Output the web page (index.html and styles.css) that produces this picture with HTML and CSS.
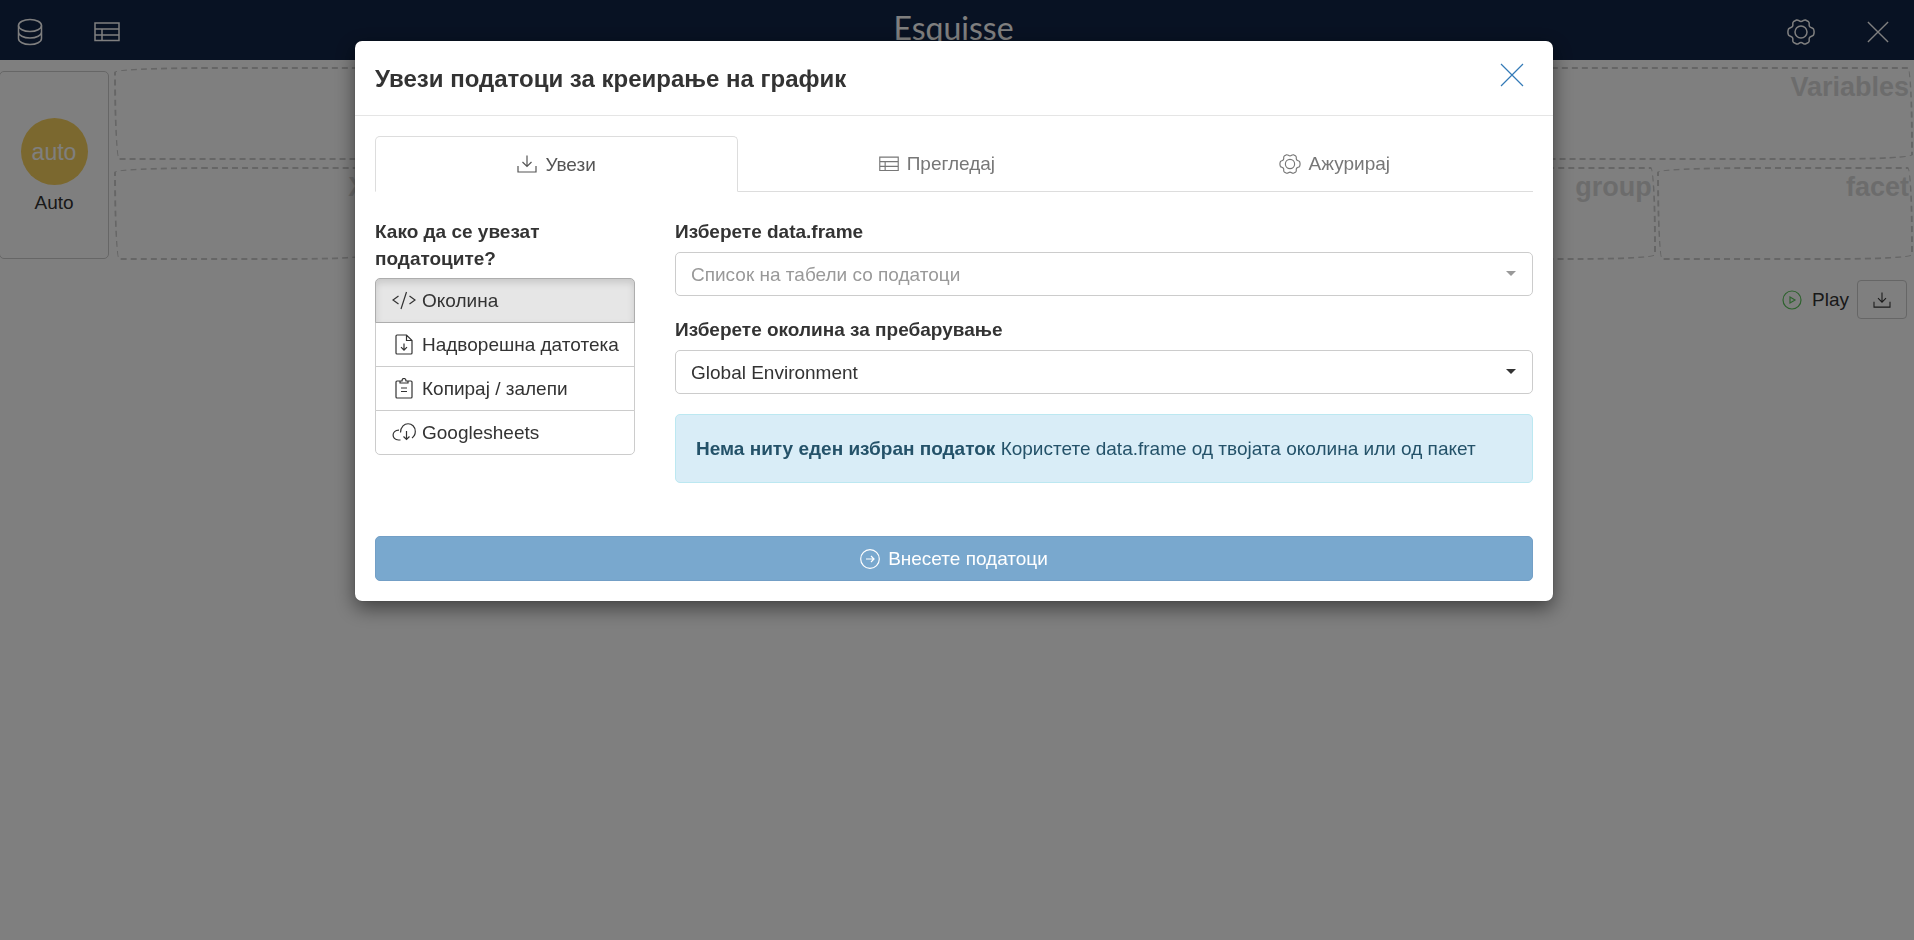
FILE: index.html
```html
<!DOCTYPE html>
<html lang="mk">
<head>
<meta charset="utf-8">
<title>Esquisse</title>
<meta name="viewport" content="width=device-width, initial-scale=1">
<link rel="stylesheet" href="styles.css">
</head>
<body>
<svg class="sprite" aria-hidden="true">
  <symbol id="i-table" viewBox="0 0 26 20"><path d="M1 1h24v17.500h-24zM1 7h24M1 13h24M8 7v11.500"/></symbol>
  <symbol id="i-gear" viewBox="0 0 28 26"><circle cx="14" cy="13" r="6"/><path d="M9.500 1C11.500 .5 12 2.500 14 2.500S16.500 .5 18.500 1L21.500 2.700C23 4 21.500 5.500 22.500 7.300S25.500 8.500 26.500 10Q27.700 13 26.500 16C25.500 17.500 23.500 17 22.500 18.700S23 22 21.500 23.300L18.500 25C16.500 25.500 16 23.500 14 23.500S11.500 25.500 9.500 25L6.500 23.300C5 22 6.500 20.500 5.500 18.700S2.500 17.500 1.500 16Q.3 13 1.500 10C2.500 8.500 4.500 9 5.500 7.300S5 4 6.500 2.700Z"/></symbol>
  <symbol id="i-import" viewBox="0 0 20 18"><path d="M1 11v6h18v-6M10 .5v10.500M5.500 7L10 11.500 14.500 7"/></symbol>
  <symbol id="i-x" viewBox="0 0 24 24"><path d="M1 1l22 22M23 1L1 23"/></symbol>
</svg>

<div class="app">
  <header class="topbar">
    <div class="topbar-side">
      <button class="icon-button" aria-label="Data"><svg class="i-db" viewBox="0 0 26 28"><ellipse cx="13" cy="7.500" rx="11.500" ry="6"/><path d="M1.500 7.500v13c0 3.300 5 6 11.500 6s11.500-2.700 11.500-6v-13M1.500 14c0 3.300 5 6 11.500 6s11.500-2.700 11.500-6"/></svg></button>
      <button class="icon-button" aria-label="Table"><svg class="i-table"><use href="#i-table"/></svg></button>
    </div>
    <h1 class="logo">Esquisse</h1>
    <div class="topbar-side">
      <button class="icon-button" aria-label="Settings"><svg class="i-gear"><use href="#i-gear"/></svg></button>
      <button class="icon-button" aria-label="Close"><svg class="i-x"><use href="#i-x"/></svg></button>
    </div>
  </header>

  <main class="workspace">
    <button class="geom"><span class="geom-icon">auto</span><span>Auto</span></button>
    <div class="zones">
      <div class="zone zone-wide">Variables</div>
      <div class="zone">X</div>
      <div class="zone"></div>
      <div class="zone"></div>
      <div class="zone"></div>
      <div class="zone"></div>
      <div class="zone">group</div>
      <div class="zone">facet</div>
    </div>
  </main>

  <div class="plot-tools">
    <button class="play"><svg class="i-play" viewBox="0 0 20 20"><circle cx="10" cy="10" r="9"/><path d="M8 7l5 3-5 3z"/></svg>Play</button>
    <button class="export" aria-label="Export"><svg class="i-export"><use href="#i-import"/></svg></button>
  </div>
</div>

<div class="backdrop">
  <section class="modal" role="dialog" aria-modal="true" aria-labelledby="modal-title">
    <header class="modal-header">
      <h2 class="modal-title" id="modal-title">Увези податоци за креирање на график</h2>
      <button class="modal-close" aria-label="Close"><svg><use href="#i-x"/></svg></button>
    </header>
    <div class="modal-body">
      <nav class="tabs">
        <a class="tab tab-active" href="#import"><svg class="tab-import"><use href="#i-import"/></svg>Увези</a>
        <a class="tab" href="#view"><svg class="tab-table"><use href="#i-table"/></svg>Прегледај</a>
        <a class="tab" href="#update"><svg class="tab-gear"><use href="#i-gear"/></svg>Ажурирај</a>
      </nav>
      <div class="panel" id="import">
        <fieldset class="sources">
          <legend class="label">Како да се увезат податоците?</legend>
          <label class="source"><input type="radio" name="source" checked><svg viewBox="0 0 24 22"><path d="M6.500 6L1 10l5.500 4M17.500 6l5.500 4-5.500 4M14.500 2L9 19"/></svg>Околина</label>
          <label class="source"><input type="radio" name="source"><svg viewBox="0 0 24 22"><path d="M14.500 1H5Q4 1 4 2v17Q4 20 5 20h14Q20 20 20 19V6.500zM14.500 1v5.500H20M12 9.500v6.500M9 13.200l3 3 3-3"/></svg>Надворешна датотека</label>
          <label class="source"><input type="radio" name="source"><svg viewBox="0 0 24 22"><path d="M8 3H5Q4 3 4 4v15Q4 20 5 20h14Q20 20 20 19V4Q20 3 19 3H16M8 5V3h2Q10 .5 12 .5T14 3h2v2zM9 10h6M9 13.500h6"/></svg>Копирај / залепи</label>
          <label class="source"><input type="radio" name="source"><svg viewBox="0 0 24 22"><path d="M8.500 18H6.500C-.8 18-.8 8 7 8.200M8.500 10.500C9-1.500 23.300-.5 23.300 9.500Q23.300 13.500 20 16M14.500 9v8.500M11.500 14.500l3 3 3-3"/></svg>Googlesheets</label>
        </fieldset>
        <div class="form">
          <label class="label" for="df">Изберете data.frame</label>
          <div class="select select-empty">
            <select id="df"><option>Список на табели со податоци</option></select>
          </div>
          <label class="label" for="env">Изберете околина за пребарување</label>
          <div class="select">
            <select id="env"><option>Global Environment</option></select>
          </div>
          <p class="alert"><strong>Нема ниту еден избран податок</strong> Користете data.frame од твојата околина или од пакет</p>
        </div>
      </div>
      <button class="submit" disabled><svg viewBox="0 0 20 20"><circle cx="10" cy="10" r="9.300"/><path d="M6 10h8M11 7l3 3-3 3"/></svg>Внесете податоци</button>
    </div>
  </section>
</div>
</body>
</html>
```
FILE: styles.css
```css
* { box-sizing: border-box; }

body {
  margin: 0;
  min-height: 100vh;
  background: #fff;
  color: #333;
  font: 19px/27px "Liberation Sans", Arial, sans-serif;
}

button, select { font: inherit; color: inherit; }
button { cursor: pointer; }

svg {
  flex: none;
  fill: none;
  stroke: currentColor;
  stroke-width: 1.2;
}

.sprite { position: absolute; width: 0; height: 0; }

/* Top bar */
.topbar {
  display: flex;
  justify-content: space-between;
  height: 60px;
  background: #112446;
  color: #fff;
}
.topbar-side { display: flex; align-items: center; padding: 4px 17px 0; gap: 51px; }
.topbar-side:last-child { padding-right: 25px; gap: 52px; }
.icon-button { display: flex; padding: 0; border: 0; background: none; }
.i-db { width: 26px; height: 28px; }
.i-table { width: 26px; height: 20px; }
.i-gear { width: 28px; height: 26px; }
.i-x { width: 22px; height: 22px; }
.icon-button svg { stroke-width: 1.5; }
.logo {
  margin: 0;
  font: 400 32px/56px Lato, sans-serif;
}

/* Drop zones */
.workspace { display: flex; gap: 5px; padding-top: 7px; }
.geom {
  display: flex;
  flex-direction: column;
  align-items: center;
  justify-content: center;
  gap: 4px;
  width: 110px;
  height: 188px;
  margin: 4px 0 0 -1px;
  padding: 4px 0 0;
  border: 1px solid #ccc;
  border-radius: 5px;
  background: #fff;
}
.geom-icon {
  width: 67px;
  height: 67px;
  border-radius: 50%;
  background: #f7d05e;
  color: #fff;
  font-size: 23px;
  line-height: 69px;
  text-align: center;
}
.zones {
  flex: 1;
  display: grid;
  grid-template-columns: repeat(7, 1fr);
  gap: 7px 1px;
  padding-right: 1px;
}
.zone {
  height: 93px;
  padding: 2px;
  border: 2px dashed #ccc;
  border-radius: 255px 15px 225px 15px / 15px 225px 15px 255px;
  color: #d9d9d9;
  font-size: 27px;
  font-weight: 700;
  line-height: 32px;
  text-align: right;
}
.zone-wide { grid-column: 1 / -1; }

.plot-tools {
  display: flex;
  align-items: center;
  justify-content: flex-end;
  gap: 8px;
  padding: 20px 7px 0;
}
.play { display: flex; align-items: center; gap: 10px; padding: 0; border: 0; background: none; }
.i-play { width: 20px; height: 20px; color: #5cc45c; }
.export {
  display: flex;
  align-items: center;
  justify-content: center;
  width: 50px;
  height: 39px;
  padding: 0;
  border: 1px solid #ccc;
  border-radius: 4px;
  background: #fff;
}
.i-export { width: 18px; height: 16px; }

/* Modal */
.backdrop {
  position: fixed;
  inset: 0;
  padding: 41px 6px 0 0;
  background: rgba(0, 0, 0, .5);
}
.modal {
  width: 100%;
  max-width: 1198px;
  margin: 0 auto;
  border-radius: 7px;
  background: #fff;
  box-shadow: 0 7px 20px rgba(0, 0, 0, .5), 0 0 1px rgba(0, 0, 0, .6);
}
.modal-header {
  display: flex;
  align-items: flex-start;
  justify-content: space-between;
  padding: 20px 29px 19px 20px;
  border-bottom: 1px solid #e5e5e5;
}
.modal-title { margin: 0; font-size: 24px; line-height: 35px; }
.modal-close { padding: 2px 0 0; border: 0; background: none; color: #337ab7; line-height: 0; }
.modal-close svg { width: 24px; height: 24px; }
.modal-body { padding: 20px; }

.tabs { display: flex; }
.tab {
  flex: 395;
  display: flex;
  align-items: center;
  justify-content: center;
  gap: 8px;
  height: 56px;
  border-bottom: 1px solid #ddd;
  color: #777;
  text-decoration: none;
}
.tab-active {
  flex: 359;
  border: 1px solid #ddd;
  border-bottom-color: #fff;
  border-radius: 5px 5px 0 0;
  color: #555;
}
.tab-import { width: 20px; height: 18px; }
.tab-table { width: 20px; height: 16px; }
.tab-gear { width: 22px; height: 20px; }
.tab-table, .tab-gear { stroke-width: 1.5; }

.panel { display: grid; grid-template-columns: 260px 1fr; gap: 40px; margin-top: 26px; }
.label { display: block; padding: 0; font-weight: 700; }
.sources { min-width: 0; margin: 0; padding: 0; border: 0; }
.sources .label { margin-bottom: 6px; }
.source {
  display: flex;
  align-items: center;
  gap: 6px;
  height: 45px;
  padding: 0 16px;
  border: 1px solid #ccc;
  background: #fff;
  white-space: nowrap;
  cursor: pointer;
}
.source + .source { margin-top: -1px; }
.source input { position: absolute; opacity: 0; }
.source svg { width: 24px; height: 22px; }
.source:first-of-type { border-radius: 5px 5px 0 0; }
.source:last-of-type { border-radius: 0 0 5px 5px; }
.source:has(:checked) {
  position: relative;
  border-color: #adadad;
  background: #e6e6e6;
  box-shadow: inset 0 4px 7px rgba(0, 0, 0, .125);
}

.form .label { margin-bottom: 7px; }
.select { position: relative; margin-bottom: 20px; }
.select::after {
  content: "";
  position: absolute;
  top: 19px;
  right: 17px;
  border: 5px solid transparent;
  border-top-color: currentColor;
  border-bottom: 0;
}
.select select {
  display: block;
  appearance: none;
  width: 100%;
  height: 44px;
  padding: 0 40px 0 15px;
  border: 1px solid #ccc;
  border-radius: 5px;
  background: #fff;
}
.select-empty { color: #999; }
.alert {
  margin: 0;
  padding: 20px;
  border: 1px solid #bce8f1;
  border-radius: 5px;
  background: #d9edf7;
  color: #245269;
}

.submit {
  display: flex;
  align-items: center;
  justify-content: center;
  gap: 8px;
  width: 100%;
  height: 45px;
  margin-top: 53px;
  border: 1px solid #739fc6;
  border-radius: 5px;
  background: #79a8ce;
  color: #fff;
}
.submit svg { width: 20px; height: 20px; }
```
